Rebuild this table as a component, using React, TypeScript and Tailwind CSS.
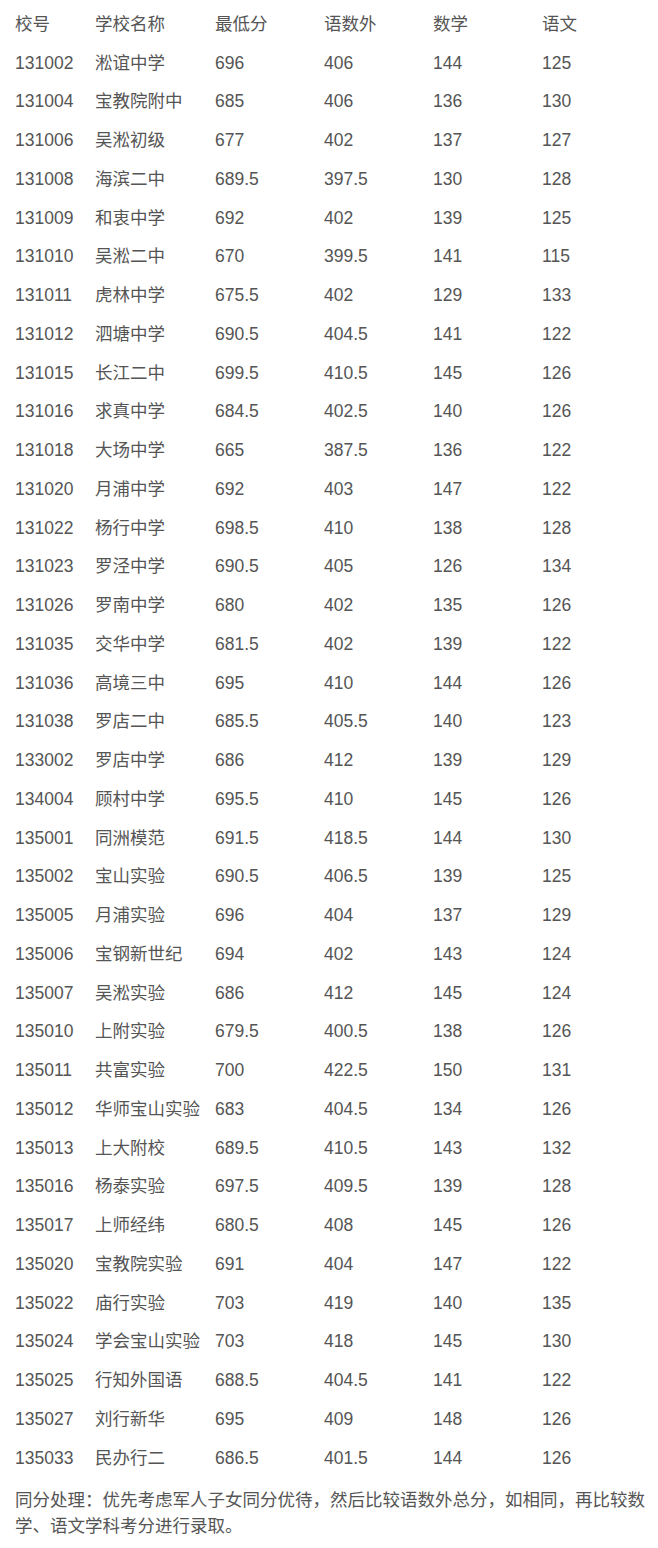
const rows: [string, string, string, string, string, string][] = [
  ["131002", "淞谊中学", "696", "406", "144", "125"],
  ["131004", "宝教院附中", "685", "406", "136", "130"],
  ["131006", "吴淞初级", "677", "402", "137", "127"],
  ["131008", "海滨二中", "689.5", "397.5", "130", "128"],
  ["131009", "和衷中学", "692", "402", "139", "125"],
  ["131010", "吴淞二中", "670", "399.5", "141", "115"],
  ["131011", "虎林中学", "675.5", "402", "129", "133"],
  ["131012", "泗塘中学", "690.5", "404.5", "141", "122"],
  ["131015", "长江二中", "699.5", "410.5", "145", "126"],
  ["131016", "求真中学", "684.5", "402.5", "140", "126"],
  ["131018", "大场中学", "665", "387.5", "136", "122"],
  ["131020", "月浦中学", "692", "403", "147", "122"],
  ["131022", "杨行中学", "698.5", "410", "138", "128"],
  ["131023", "罗泾中学", "690.5", "405", "126", "134"],
  ["131026", "罗南中学", "680", "402", "135", "126"],
  ["131035", "交华中学", "681.5", "402", "139", "122"],
  ["131036", "高境三中", "695", "410", "144", "126"],
  ["131038", "罗店二中", "685.5", "405.5", "140", "123"],
  ["133002", "罗店中学", "686", "412", "139", "129"],
  ["134004", "顾村中学", "695.5", "410", "145", "126"],
  ["135001", "同洲模范", "691.5", "418.5", "144", "130"],
  ["135002", "宝山实验", "690.5", "406.5", "139", "125"],
  ["135005", "月浦实验", "696", "404", "137", "129"],
  ["135006", "宝钢新世纪", "694", "402", "143", "124"],
  ["135007", "吴淞实验", "686", "412", "145", "124"],
  ["135010", "上附实验", "679.5", "400.5", "138", "126"],
  ["135011", "共富实验", "700", "422.5", "150", "131"],
  ["135012", "华师宝山实验", "683", "404.5", "134", "126"],
  ["135013", "上大附校", "689.5", "410.5", "143", "132"],
  ["135016", "杨泰实验", "697.5", "409.5", "139", "128"],
  ["135017", "上师经纬", "680.5", "408", "145", "126"],
  ["135020", "宝教院实验", "691", "404", "147", "122"],
  ["135022", "庙行实验", "703", "419", "140", "135"],
  ["135024", "学会宝山实验", "703", "418", "145", "130"],
  ["135025", "行知外国语", "688.5", "404.5", "141", "122"],
  ["135027", "刘行新华", "695", "409", "148", "126"],
  ["135033", "民办行二", "686.5", "401.5", "144", "126"],
]

const header = ["校号", "学校名称", "最低分", "语数外", "数学", "语文"]

function Row({ cells }: { cells: string[] }) {
  return (
    <div className="grid h-[38.75px] grid-cols-[80px_120px_109px_109px_109px_1fr] items-center">
      {cells.map((c, i) => (
        <div key={i} className="whitespace-nowrap">
          {c}
        </div>
      ))}
    </div>
  )
}

export default function App() {
  return (
    <div className="min-h-[1548px] bg-white pt-[5px] pl-[15px] pr-[8px] text-[17.5px] leading-[27px] text-[#555] [font-family:'Liberation_Sans','Noto_Sans_CJK_SC',sans-serif]">
      {/* score table */}
      <div>
        <Row cells={header} />
        {rows.map((r) => (
          <Row key={r[0]} cells={r} />
        ))}
      </div>

      <p className="mt-[9px] leading-[26px]">
        同分处理：优先考虑军人子女同分优待，然后比较语数外总分，如相同，再比较数学、语文学科考分进行录取。
      </p>
    </div>
  )
}
